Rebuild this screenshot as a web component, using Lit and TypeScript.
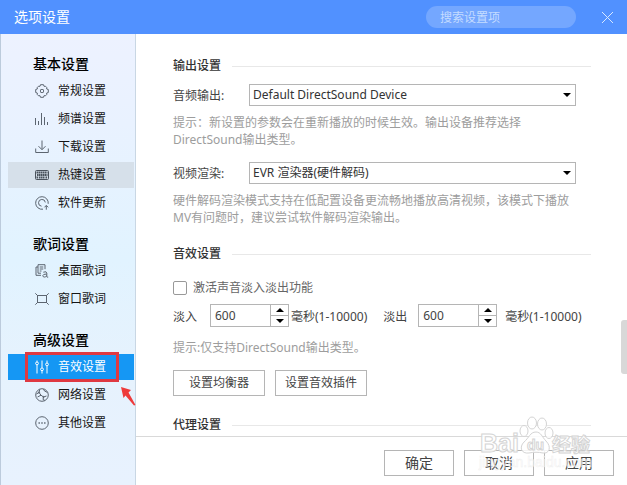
import { LitElement, html, css, svg } from "lit";
import { customElement, state } from "lit/decorators.js";
import { classMap } from "lit/directives/class-map.js";

const icons: Record<string, unknown> = {
  gear: svg`<path d="M5 2.300 5.500.7h3L9 2.300h1.600l1.100 1.100V5l1.600.5v3l-1.600.5v1.600l-1.100 1.100H9l-.5 1.600h-3L5 11.700H3.400l-1.100-1.100V9L.7 8.500v-3L2.300 5V3.400l1.100-1.100z" stroke-linejoin="round"/><rect x="5.500" y="5.500" width="3" height="3" rx=".6"/>`,
  bars: svg`<path d="M.5 6v7M3.500 9v4M6.500 1v12M9.500 5v8M12.500 10v3"/>`,
  download: svg`<path d="M7 .5v9M3.5 6.2 7 9.7l3.5-3.5M.7 8.5v4h12.6v-4"/>`,
  keyboard: svg`<rect x=".5" y="2.5" width="13" height="9" rx="1" stroke="#4a525c"/><path d="M1.500 4.500h11M2 7h10.500M1.500 9.500h1.600m.8 0h5.800m.8 0h2" stroke="#4a525c" stroke-width="1.900" stroke-dasharray="1.600 .4"/>`,
  update: svg`<path d="M8 13.2a6.3 6.3 0 1 1 5.2-5.4"/><path d="M6.5 10.2a3.4 3.4 0 1 1 3.8-3.8M11.3 13.7V9.6M9.5 11.3l1.8-1.9 1.9 1.9"/>`,
  lyric: svg`<path d="M3 3H1v8.3h5M3 9.2V.7h7v4.5M3 9.2h3M4.7 3h3.6M4.7 5h3.6M4.7 7h1.8"/><path d="M8.3 8.2q3.5-1.4 3.5 1v3.7q0 .4 1.4.2M11.8 10q-4 0-4 1.7c0 1.8 2.8 1.8 4 0"/>`,
  frame: svg`<rect x="2.5" y="3.5" width="9" height="7"/><path d="M.3 1.3l2 2M13.7 1.3l-2 2M.3 12.700l2-2M13.7 12.700l-2-2"/>`,
  mixer: svg`<path d="M2 .5v1.4M2 4.9v8.6M7 .5v7.3M7 10.8v2.7M12 .5v2.4M12 5.9v7.6"/><circle cx="2" cy="3.4" r="1.4"/><circle cx="7" cy="9.3" r="1.4"/><circle cx="12" cy="4.4" r="1.4"/>`,
  globe: svg`<circle cx="7" cy="7" r="6.3"/><path d="M4.800 1.200 4 4.500l2 2.700 2.500 1.800 3-1M4 4.500 1.500 6M6 7.200 2.500 9M8.500 9l-.5 2.500 2 1M8.500 1l1 2 3 1.500"/><circle cx="4" cy="4.500" r=".6"/><circle cx="8.500" cy="9" r=".6"/>`,
  more: svg`<circle cx="7" cy="7" r="6.3"/><path d="M3.5 7h1.4M6.3 7h1.4M9.1 7h1.4" stroke-width="1.5"/>`,
};

const groups = [
  { title: "基本设置", items: [["gear", "常规设置"], ["bars", "频谱设置"], ["download", "下载设置"], ["keyboard", "热键设置"], ["update", "软件更新"]] },
  { title: "歌词设置", items: [["lyric", "桌面歌词"], ["frame", "窗口歌词"]] },
  { title: "高级设置", items: [["mixer", "音效设置"], ["globe", "网络设置"], ["more", "其他设置"]] },
];

@customElement("app-root")
export class AppRoot extends LitElement {
  @state() private active = "音效设置";
  @state() private fadeIn = 600;
  @state() private fadeOut = 600;

  static styles = css`
    :host {
      display: flex;
      flex-direction: column;
      position: relative;
      min-height: 100vh;
      background: #fff;
      color: #444;
      font: 12px/20px "Noto Sans", "Noto Sans CJK SC", sans-serif;
    }
    * { box-sizing: border-box; }
    button, input, select { font: inherit; color: inherit; margin: 0; padding: 0; }
    button { cursor: pointer; background: #fff; }
    h1, h2, p { margin: 0; }
    .header {
      display: flex;
      align-items: center;
      height: 34px;
      padding: 0 13px 0 14px;
      background: #5191ff;
      color: #fff;
    }
    .title { font-size: 14px; font-weight: 400; flex: 1; }
    .search {
      width: 150px;
      height: 22px;
      padding: 0 14px;
      border: 0;
      border-radius: 11px;
      background: #74a7ff;
      outline: none;
    }
    .search::placeholder { color: #c4dcff; opacity: 1; }
    .close { display: flex; margin-left: 25px; border: 0; background: none; }
    .close svg { width: 13px; height: 13px; stroke: #d8e8ff; fill: none; }
    .body { flex: 1; display: flex; min-height: 0; }
    .side {
      width: 136px;
      flex: none;
      padding: 16px 1px 0 7px;
      border-left: 1px solid #bccbdc;
      border-right: 1px solid #c9d7e4;
      background: linear-gradient(#edf2ff 0%, #e9f2ff 20%, #e1f3ff 50%, #e6f2fd 75%, #e8f2fe 100%);
      color: #151515;
    }
    .group { margin-bottom: 14px; }
    .group-title { padding-left: 25px; font-size: 14px; font-weight: 500; line-height: 28px; color: #000; }
    .item {
      display: flex;
      align-items: center;
      gap: 9px;
      height: 26px;
      margin-bottom: 2px;
      padding-left: 27px;
      color: inherit;
      text-decoration: none;
    }
    .item svg { width: 14px; height: 14px; fill: none; stroke: #5c6570; overflow: visible; }
    .item.hovered { background: #d6e0ea; }
    .item.active { position: relative; background: #1597f4; color: #fff; }
    .item.active svg { stroke: #fff; }
    .mark {
      position: absolute;
      left: 17px;
      top: -2px;
      width: 94px;
      height: 30px;
      border: 3px solid #df3941;
    }
    .item.active .arrow {
      position: absolute;
      left: 112px;
      top: 32px;
      width: 17px;
      height: 21px;
      fill: #ee3b3b;
      stroke: none;
    }
    .main { flex: 1; min-width: 0; display: flex; flex-direction: column; }
    .content { flex: 1; padding: 22px 36px 0 37px; }
    .section { display: flex; align-items: center; gap: 11px; }
    .section::after { content: ""; flex: 1; height: 1px; background: #e8e8e8; }
    .section-title { font-size: 12px; font-weight: 500; color: #333; }
    .field { display: flex; align-items: center; margin: 8px 15px 8px 0; }
    .field label { width: 76px; padding-top: 2px; }
    .select { position: relative; flex: 1; display: flex; }
    .select select {
      appearance: none;
      flex: 1;
      height: 22px;
      padding: 0 20px 0 3px;
      border: 1px solid #b5b5b5;
      border-radius: 0;
      background: #fff;
      color: #333;
    }
    .select::after {
      content: "";
      position: absolute;
      right: 5px;
      top: 9px;
      border: 4px solid transparent;
      border-top: 4px solid #000;
      border-bottom: 0;
    }
    .hint { line-height: 17px; color: #9d9d9d; margin-bottom: 14px; }
    .hint.last { margin-bottom: 18px; }
    .check { display: flex; align-items: center; gap: 6px; margin-top: 14px; color: #666; }
    .check input {
      appearance: none;
      width: 14px;
      height: 14px;
      border: 1px solid #999;
      border-radius: 2px;
      background: #fff;
    }
    .check input:checked { background: #1597f4; }
    .fades { display: flex; align-items: center; margin: 6px 0 12px; white-space: nowrap; }
    .fades label { padding-top: 3px; width: 37px; }
    .fades .second { width: 35px; }
    .unit { padding: 3px 16px 0 2px; }
    .fades .unit.wide { padding: 3px 0 0 8px; }
    .spin { display: flex; width: 79px; height: 23px; border: 1px solid #b5b5b5; }
    .spin input { width: 59px; padding: 0 4px; border: 0; outline: none; background: none; color: #444; }
    .steps { flex: 1; display: flex; flex-direction: column; border-left: 1px solid #b5b5b5; }
    .step { flex: 1; display: flex; align-items: center; justify-content: center; border: 0; }
    .step + .step { border-top: 1px solid #b5b5b5; }
    .step svg { width: 8px; height: 4px; fill: #000; }
    .actions { display: flex; gap: 10px; margin-bottom: 19px; }
    .btn { height: 26px; border: 1px solid #b5b5b5; color: #444; }
    .actions .btn { width: 92px; }
    .footer {
      display: flex;
      justify-content: flex-end;
      gap: 10px;
      padding: 13px 13px 9px;
      border-top: 1px solid #d9d9d9;
    }
    .footer .btn { width: 70px; font-size: 14px; }
    .thumb { position: absolute; right: 0; top: 320px; width: 6px; height: 54px; border-radius: 3px 0 0 3px; background: #d8d8d8; }
    .watermark { position: absolute; right: 30px; bottom: 11px; width: 118px; height: 58px; pointer-events: none; overflow: visible; }
    .outline { fill: #fff; fill-opacity: 0.85; stroke: #d4d4d4; stroke-width: 1; }
    .wm-text { font: 700 25px "Liberation Sans", sans-serif; }
    .wm-du { font: 700 14px "Liberation Sans", sans-serif; }
    .wm-cjk { font: 700 19px "Noto Sans CJK SC", sans-serif; }
    .wm-url { font: 14px "Liberation Sans", sans-serif; fill: #fff; fill-opacity: 0.6; stroke: #e6e6e6; stroke-opacity: 0.6; stroke-width: 0.5; }
  `;

  private spin(id: string, value: number, set: (n: number) => void) {
    return html`<div class="spin">
      <input id=${id} type="text" inputmode="numeric" .value=${String(value)} />
      <div class="steps">
        <button class="step" aria-label="增加" @click=${() => set(Math.min(10000, value + 1))}>
          <svg viewBox="0 0 8 4"><path d="M0 4 4 0l4 4z" /></svg>
        </button>
        <button class="step" aria-label="减少" @click=${() => set(Math.max(1, value - 1))}>
          <svg viewBox="0 0 8 4"><path d="M0 0h8L4 4z" /></svg>
        </button>
      </div>
    </div>`;
  }

  private item([icon, name]: string[]) {
    const active = name === this.active;
    return html`<a
      href="#"
      class=${classMap({ item: true, active, hovered: name === "热键设置" && !active })}
      @click=${(e: Event) => { e.preventDefault(); this.active = name; }}
    >
      <svg viewBox="0 0 14 14">${icons[icon]}</svg>${name}
      ${active
        ? html`<span class="mark"></span>
            <svg class="arrow" viewBox="0 0 17 21"><path d="M1 1 11 4 8.5 6.5 15.500 19 14 19.500 5.500 9.500 3.500 12z" /></svg>`
        : ""}
    </a>`;
  }

  render() {
    return html`
      <header class="header">
        <h1 class="title">选项设置</h1>
        <input class="search" type="text" placeholder="搜索设置项" aria-label="搜索设置项" />
        <button class="close" aria-label="关闭">
          <svg viewBox="0 0 13 13"><path d="M1 1l11 11M12 1 1 12" /></svg>
        </button>
      </header>
      <div class="body">
        <nav class="side">
          ${groups.map((g) => html`<div class="group">
            <h2 class="group-title">${g.title}</h2>
            ${g.items.map((i) => this.item(i))}
          </div>`)}
        </nav>
        <main class="main">
          <div class="content">
            <div class="section"><h2 class="section-title">输出设置</h2></div>
            <div class="field">
              <label for="audio">音频输出:</label>
              <div class="select"><select id="audio"><option>Default DirectSound Device</option></select></div>
            </div>
            <p class="hint">提示：新设置的参数会在重新播放的时候生效。输出设备推荐选择<br />DirectSound输出类型。</p>
            <div class="field">
              <label for="video">视频渲染:</label>
              <div class="select"><select id="video"><option>EVR 渲染器(硬件解码)</option></select></div>
            </div>
            <p class="hint last">硬件解码渲染模式支持在低配置设备更流畅地播放高清视频，该模式下播放<br />MV有问题时，建议尝试软件解码渲染输出。</p>
            <div class="section"><h2 class="section-title">音效设置</h2></div>
            <label class="check"><input type="checkbox" />激活声音淡入淡出功能</label>
            <div class="fades">
              <label for="in">淡入</label>
              ${this.spin("in", this.fadeIn, (n) => (this.fadeIn = n))}
              <span class="unit">毫秒(1-10000)</span>
              <label class="second" for="out">淡出</label>
              ${this.spin("out", this.fadeOut, (n) => (this.fadeOut = n))}
              <span class="unit wide">毫秒(1-10000)</span>
            </div>
            <p class="hint">提示:仅支持DirectSound输出类型。</p>
            <div class="actions">
              <button class="btn">设置均衡器</button>
              <button class="btn">设置音效插件</button>
            </div>
            <div class="section"><h2 class="section-title">代理设置</h2></div>
          </div>
          <footer class="footer">
            <button class="btn">确定</button>
            <button class="btn">取消</button>
            <button class="btn">应用</button>
          </footer>
        </main>
      </div>
      <div class="thumb"></div>
      <svg class="watermark" viewBox="0 0 118 58">
        <text class="outline wm-text" x="1" y="36">Bai</text>
        <g class="outline">
          <ellipse cx="45" cy="15" rx="4" ry="5.500" />
          <ellipse cx="53" cy="7" rx="4.500" ry="6" />
          <ellipse cx="63" cy="8" rx="4.500" ry="6" />
          <ellipse cx="70" cy="17" rx="4" ry="5.500" />
          <path d="M57 16c5 0 6 5 10 9 6 6 3 13-3 12-5-1-9-1-14 0-8 1-10-6-5-11 5-4 6-10 12-10z" />
        </g>
        <text class="outline wm-du" x="48" y="34">du</text>
        <text class="outline wm-cjk" x="73" y="36">经验</text>
        <text class="wm-url" x="0" y="51">jingyan.baidu.com</text>
      </svg>
    `;
  }
}
